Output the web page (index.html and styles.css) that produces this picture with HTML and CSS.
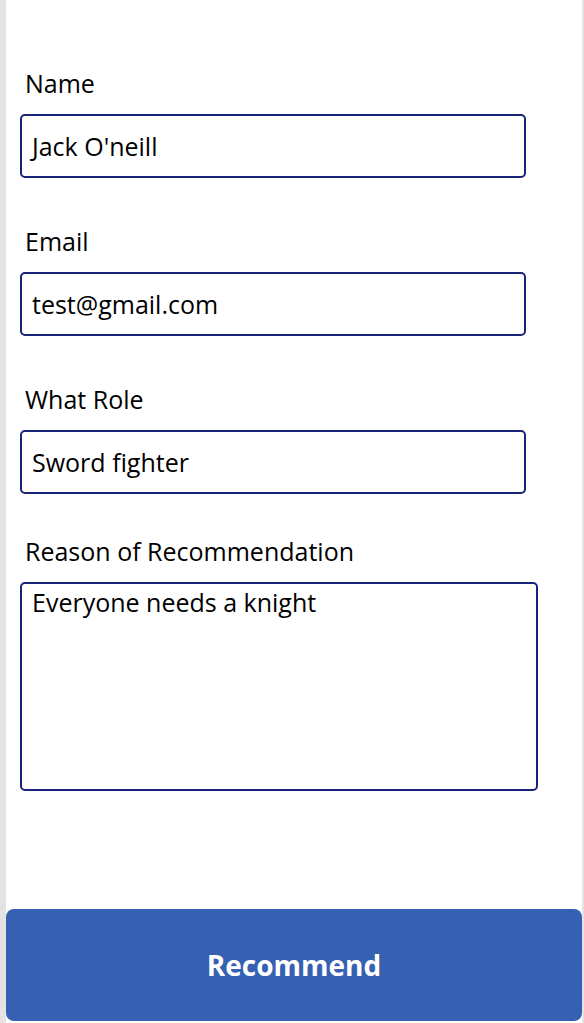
FILE: index.html
```html
<!DOCTYPE html>
<html lang="en">
<head>
<meta charset="utf-8">
<title>Recommend</title>
<link rel="stylesheet" href="styles.css">
</head>
<body>
<div class="screen">
  <form class="form">
    <div class="field">
      <label class="label">Name</label>
      <div class="input">Jack O'neill</div>
    </div>
    <div class="field">
      <label class="label">Email</label>
      <div class="input">test@gmail.com</div>
    </div>
    <div class="field">
      <label class="label">What Role</label>
      <div class="input">Sword fighter</div>
    </div>
    <div class="field field-tight">
      <label class="label">Reason of Recommendation</label>
      <div class="textarea">Everyone needs a knight</div>
    </div>
  </form>
  <button class="button" type="button">Recommend</button>
</div>
</body>
</html>
```

FILE: styles.css
```css
* { box-sizing: border-box; }
html, body { margin: 0; padding: 0; background: #ffffff; }
body {
  font-family: "Open Sans", "Noto Sans", sans-serif;
  color: #000000;
}
.screen {
  height: 1023px;
  display: flex;
  flex-direction: column;
  border-left: 6px solid #e3e3e3;
  border-right: 2px solid #e3e3e3;
  background: #ffffff;
}
.form {
  display: flex;
  flex-direction: column;
  gap: 46px;
  padding: 66px 0 0 14px;
}
.field {
  display: flex;
  flex-direction: column;
}
.field-tight { margin-top: -6px; }
.label {
  display: block;
  font-size: 25px;
  line-height: 32px;
  height: 32px;
  margin: 1px 0 15px 5px;
  white-space: nowrap;
}
.input {
  width: 506px;
  height: 64px;
  border: 2px solid #1a237a;
  border-radius: 5px;
  padding: 0 10px;
  font-size: 25px;
  line-height: 60px;
  white-space: nowrap;
}
.textarea {
  width: 518px;
  height: 209px;
  border: 2px solid #1a237a;
  border-radius: 5px;
  padding: 2px 10px;
  font-size: 25px;
  line-height: 32px;
}
.button {
  margin-top: auto;
  margin-bottom: 2px;
  height: 112px;
  border: 0;
  border-radius: 8px;
  background: #3660b2;
  color: #ffffff;
  font-family: "Open Sans", "Noto Sans", sans-serif;
  font-weight: 700;
  font-size: 28px;
  padding: 0;
}
```
